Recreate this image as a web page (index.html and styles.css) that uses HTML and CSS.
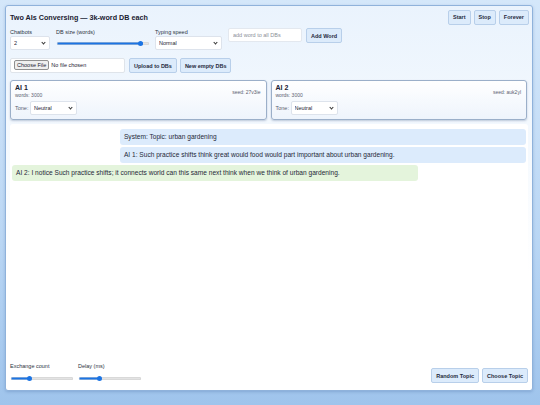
FILE: index.html
```html
<!DOCTYPE html>
<html lang="en">
<head>
<meta charset="utf-8">
<title>Two AIs Conversing</title>
<link rel="stylesheet" href="styles.css">
</head>
<body>
<div class="app">
  <header class="top">
    <h1 class="title">Two AIs Conversing — 3k-word DB each</h1>
    <div class="btns">
      <button class="btn">Start</button>
      <button class="btn">Stop</button>
      <button class="btn">Forever</button>
    </div>
  </header>

  <div class="controls">
    <label class="field">
      <span class="lbl">Chatbots</span>
      <span class="sel w-chat"><select><option>2</option></select></span>
    </label>
    <label class="field">
      <span class="lbl">DB size (words)</span>
      <input type="range" class="range r-db" min="0" max="100" value="93" style="--p:93%">
    </label>
    <label class="field">
      <span class="lbl">Typing speed</span>
      <span class="sel w-speed"><select><option>Normal</option></select></span>
    </label>
    <input type="text" class="word" placeholder="add word to all DBs">
    <button class="btn btn-add">Add Word</button>
  </div>

  <div class="filerow">
    <span class="filebox"><input type="file" class="file"></span>
    <button class="btn btn-tall">Upload to DBs</button>
    <button class="btn btn-tall">New empty DBs</button>
  </div>

  <div class="cards">
    <div class="card">
      <div class="card-head">
        <div>
          <div class="name">AI 1</div>
          <div class="words">words: 3000</div>
        </div>
        <div class="seed">seed: 27v3ie</div>
      </div>
      <div class="tone">
        <span class="tlbl">Tone:</span>
        <span class="sel w-tone"><select><option>Neutral</option></select></span>
      </div>
    </div>
    <div class="card">
      <div class="card-head">
        <div>
          <div class="name">AI 2</div>
          <div class="words">words: 3000</div>
        </div>
        <div class="seed">seed: auk2yl</div>
      </div>
      <div class="tone">
        <span class="tlbl">Tone:</span>
        <span class="sel w-tone"><select><option>Neutral</option></select></span>
      </div>
    </div>
  </div>

  <div class="chat">
    <div class="msg me">System: Topic: urban gardening</div>
    <div class="msg me">AI 1: Such practice shifts think great would food would part important about urban gardening.</div>
    <div class="msg other">AI 2: I notice Such practice shifts; it connects world can this same next think when we think of urban gardening.</div>
  </div>

  <footer class="foot">
    <div class="sliders">
      <label class="field">
        <span class="lbl">Exchange count</span>
        <input type="range" class="range r-small" min="0" max="100" value="28" style="--p:28%">
      </label>
      <label class="field">
        <span class="lbl">Delay (ms)</span>
        <input type="range" class="range r-small" min="0" max="100" value="32" style="--p:32%">
      </label>
    </div>
    <div class="btns">
      <button class="btn btn-tall">Random Topic</button>
      <button class="btn btn-tall">Choose Topic</button>
    </div>
  </footer>
</div>
</body>
</html>
```

FILE: styles.css
```css
* { box-sizing: border-box; }

html, body {
  margin: 0;
  height: 405px;
}

body {
  background: linear-gradient(to bottom, #d4e7fa 0%, #b9d6f4 60%, #9fc4ec 100%);
  font-family: "Liberation Sans", Arial, sans-serif;
  color: #1c2433;
  padding: 5px 7px 0 5px;
}

.app {
  height: 386px;
  border: 1px solid #8fb2db;
  border-radius: 3px;
  background: linear-gradient(to bottom, #eaf3fd 0%, #f4f9fe 35%, #ffffff 70%);
  box-shadow: 0 1px 3px rgba(40, 80, 140, 0.25);
  padding: 3px 3px 7px 4px;
  display: flex;
  flex-direction: column;
}

/* header */
.top {
  display: flex;
  justify-content: space-between;
  align-items: center;
  height: 16px;
}

.title {
  margin: 0;
  font-size: 7.2px;
  font-weight: bold;
  color: #1a2130;
}

.btns {
  display: flex;
  gap: 3px;
}

.btn {
  font-family: "Liberation Sans", Arial, sans-serif;
  font-size: 5.5px;
  font-weight: bold;
  color: #1f2a3c;
  background: #dcebfb;
  border: 1px solid #b8cfea;
  border-radius: 2px;
  height: 15px;
  padding: 0 4px;
  margin: 0;
  cursor: pointer;
}

/* controls row */
.controls {
  display: flex;
  align-items: flex-start;
  margin-top: 3px;
  height: 22px;
}

.field {
  display: flex;
  flex-direction: column;
  margin-right: 6px;
}

.lbl {
  font-size: 5.5px;
  color: #2c3442;
  line-height: 6px;
  margin-top: 1px;
  margin-bottom: 1px;
}

.sel {
  position: relative;
  display: block;
  height: 14px;
}

.sel select {
  display: block;
  -webkit-appearance: none;
  appearance: none;
  width: 100%;
  height: 14px;
  line-height: 12px;
  font-family: "Liberation Sans", Arial, sans-serif;
  font-size: 5.5px;
  color: #1c2433;
  background: #ffffff;
  border: 1px solid #dde3ec;
  border-radius: 2px;
  padding: 0 3px;
  margin: 0;
}

.sel::after {
  content: "";
  position: absolute;
  right: 5px;
  top: 5px;
  width: 2px;
  height: 2px;
  border-right: 1px solid #333;
  border-bottom: 1px solid #333;
  transform: rotate(45deg);
  pointer-events: none;
}

.w-chat { width: 40px; }
.w-speed { width: 67px; }
.w-tone { width: 47px; }

.range {
  -webkit-appearance: none;
  appearance: none;
  display: block;
  background: transparent;
  margin: 0;
  height: 6px;
  padding: 0;
}

.range::-webkit-slider-runnable-track {
  height: 3px;
  border-radius: 2px;
  background: linear-gradient(to right, #1b74e4 var(--p), #e3e3e3 var(--p));
  box-shadow: inset 0 0 0 0.5px #cfcfcf;
}

.range::-webkit-slider-thumb {
  -webkit-appearance: none;
  appearance: none;
  width: 5px;
  height: 5px;
  border-radius: 50%;
  background: #1b74e4;
  margin-top: -1px;
  border: none;
}

.r-db {
  width: 92px;
  margin-top: 4px;
  margin-left: 1px;
}

.word {
  width: 74px;
  height: 14px;
  font-family: "Liberation Sans", Arial, sans-serif;
  font-size: 5.5px;
  border: 1px solid #e3e8ef;
  border-radius: 2px;
  background: #fff;
  padding: 0 4px;
  margin: 0 4px 0 0;
}

.word::placeholder { color: #8a8f98; }

.btn-add { height: 15px; }

/* file row */
.filerow {
  display: flex;
  align-items: center;
  margin-top: 8px;
  gap: 3px;
}

.filebox {
  width: 115px;
  height: 15px;
  background: #fff;
  border: 1px solid #dfe4ea;
  border-radius: 2px;
  padding: 0 3px;
  display: flex;
  align-items: flex-start;
  margin-right: 1px;
}

.file {
  font-family: "Liberation Sans", Arial, sans-serif;
  font-size: 5.5px;
  color: #1c2433;
  width: 100%;
  margin-top: 1px;
}

.file::file-selector-button {
  font-family: "Liberation Sans", Arial, sans-serif;
  font-size: 5.5px;
  height: 10px;
  padding: 0 2px;
  margin-right: 2px;
  background: #efefef;
  border: 1px solid #8f8f8f;
  border-radius: 2px;
  color: #1c2433;
}

.btn-tall { height: 15px; }

/* cards */
.cards {
  display: flex;
  gap: 4px;
  margin-top: 7px;
  padding-right: 2px;
}

.card {
  flex: 1;
  height: 40px;
  border: 1px solid #9bafc9;
  border-radius: 3px;
  background: linear-gradient(to bottom, #ffffff, #eef4fc);
  box-shadow: 0 1px 2px rgba(30, 60, 110, 0.25);
  padding: 3px 5px 0 4px;
}

.card-head {
  display: flex;
  justify-content: space-between;
  align-items: center;
}

.name {
  font-size: 7px;
  font-weight: bold;
  line-height: 8px;
  color: #1a2130;
}

.words {
  font-size: 5px;
  line-height: 6px;
  color: #5a6170;
}

.seed {
  font-size: 5px;
  color: #5a6170;
  margin-top: 1px;
}

.tone {
  display: flex;
  align-items: center;
  margin-top: 3px;
}

.tlbl {
  font-size: 5.5px;
  color: #5a6170;
  width: 15px;
}

/* chat */
.chat {
  flex: 1;
  margin-top: 4px;
  margin-right: 1px;
  background: #ffffff;
  border-radius: 3px;
  padding: 5px 2px 2px 2px;
  display: flex;
  flex-direction: column;
  gap: 2px;
}

.msg {
  width: 79%;
  font-size: 6.6px;
  line-height: 8px;
  padding: 4px 4px;
  border-radius: 3px;
  color: #1f2838;
}

.me {
  align-self: flex-end;
  background: #dcebfc;
}

.other {
  align-self: flex-start;
  background: #e4f4dc;
}

/* footer */
.foot {
  display: flex;
  justify-content: space-between;
  align-items: flex-end;
  margin-top: 4px;
  padding-right: 1px;
}

.sliders {
  display: flex;
  align-items: flex-end;
  padding-bottom: 2px;
}

.sliders .field { margin-right: 5px; }

.sliders .lbl { margin-bottom: 6px; }

.r-small {
  width: 62px;
  margin-left: 1px;
}
```
